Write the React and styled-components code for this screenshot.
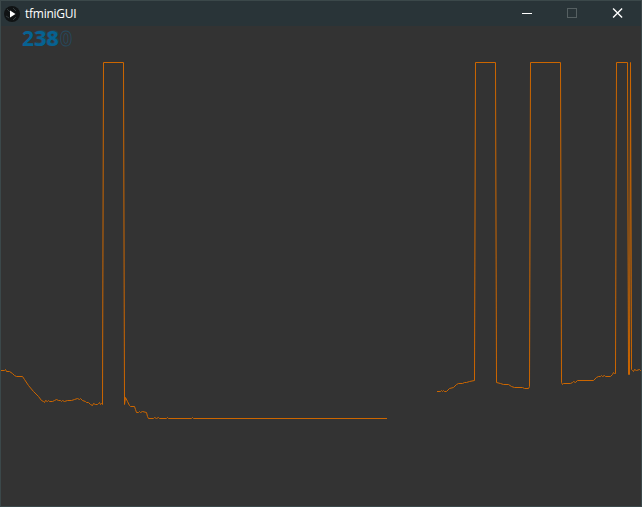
import React from "react";
import styled, { createGlobalStyle } from "styled-components";

const GlobalStyle = createGlobalStyle`
  * { box-sizing: border-box; }
  body { margin: 0; background: #333; overflow: hidden; }
`;

const Window = styled.div`
  width: 642px;
  height: 507px;
  display: flex;
  flex-direction: column;
  border: 1px solid #3b484a;
  background: #333333;
`;

const TitleBar = styled.header`
  height: 25px;
  flex: none;
  display: flex;
  align-items: center;
  background: #293438;
  color: #fff;
`;

const AppIcon = styled.svg`
  width: 16px;
  height: 16px;
  margin-left: 3px;
  flex: none;
`;

const Title = styled.h1`
  margin: 0 auto 0 5px;
  font: 400 12px/16px "Open Sans", "Noto Sans", sans-serif;
  letter-spacing: -0.25px;
`;

const Controls = styled.div`
  display: flex;
  height: 100%;
`;

const ControlButton = styled.button`
  width: ${(p) => p.$width || 45}px;
  height: 100%;
  padding: 0;
  border: 0;
  display: grid;
  place-items: center;
  background: transparent;
  color: ${(p) => (p.disabled ? "#566062" : "#fff")};
`;

const Glyph = styled.svg`
  width: 11px;
  height: 11px;
  display: block;
  fill: none;
  stroke: currentColor;
`;

const Canvas = styled.main`
  position: relative;
  flex: 1;
  min-height: 0;
`;

const Plot = styled.svg`
  display: block;
  width: 640px;
  height: 480px;
  fill: none;
  stroke: #cc6600;
  stroke-width: 1;
  stroke-linecap: square;
`;

const Reading = styled.div`
  position: absolute;
  left: 21px;
  top: 0;
  display: flex;
  font: 700 21px/25px "Noto Sans", "Open Sans", sans-serif;
  color: #066292;
`;

const Digit = styled.span`
  width: 12.4px;
  margin-left: ${(p) => (p.$faded ? "0.8px" : "0")};
  color: ${(p) => (p.$faded ? "#333333" : "inherit")};
  -webkit-text-stroke: ${(p) => (p.$faded ? "0.8px #254b60" : "0")};
  text-shadow: ${(p) => (p.$trail ? "-1px 0 #1f4e68, 1px -1px #29404d" : "none")};
`;

const traces = [
  "1,370 4,370 5,369 6,371 9,371 12,373 14,375 16,376 22,376 24,379 28,385 33,391 38,396 41,400 43,401 44,402 45,400 47,401 48,400 49,401 52,401 54,400 56,399 58,400 60,400 61,401 62,400 64,401 67,400 71,400 74,399 77,398 79,399 80,398 82,400 85,401 86,402 88,402 90,404 92,405 93,403 95,404 97,404 98,403 99,402 100,404 101,403 102,404 103,62 123,62 124,404 125,397 127,401 129,405 130,406 134,406 135,409 136,412 138,412 139,411 140,412 142,411 146,412 147,416 148,418 153,418 154,417 156,418 158,417 159,418 166,418 167,417 168,418 191,418 192,417 193,418 386,418",
  "437,391 440,391 441,390 442,391 443,390 444,391 446,391 449,388 453,387 456,384 458,383 462,383 464,382 466,382 469,381 474,380 475,62 495,62 496,382 500,383 503,384 508,384 511,386 514,387 522,387 524,388 528,388 529,386 530,62 560,62 561,382 562,384 563,383 570,383 572,382 573,381 575,382 577,380 593,380 596,377 598,376 600,376 601,375 602,376 604,375 605,376 610,376 612,374 613,372 614,373 615,373 616,62 627,62 628,374 629,374 630,62 631,369 632,370 633,371 634,369 636,370 639,369 640,370",
];

export default function App() {
  return (
    <>
      <GlobalStyle />
      <Window>
        <TitleBar>
          <AppIcon viewBox="0 0 16 16">
            <circle cx="8" cy="8" r="8" fill="#101314" />
            <path d="M3 3l3 3M9 2l3 3M2 10l3 2M9 14l3-3" stroke="#343c3e" />
            <path d="M6 4.5v7L11.5 8z" fill="#fff" />
          </AppIcon>
          <Title>tfminiGUI</Title>
          <Controls>
            <ControlButton aria-label="Minimize">
              <Glyph viewBox="0 0 11 11" shapeRendering="crispEdges"><path d="M1 5.5h10" /></Glyph>
            </ControlButton>
            <ControlButton aria-label="Maximize" disabled>
              <Glyph viewBox="0 0 11 11" shapeRendering="crispEdges"><path d="M1.5.5h9v9h-9z" /></Glyph>
            </ControlButton>
            <ControlButton aria-label="Close" $width={47}>
              <Glyph viewBox="-0.5 0 11 11"><path d="M.6.6l9 9M9.6.6l-9 9" strokeWidth="1.4" /></Glyph>
            </ControlButton>
          </Controls>
        </TitleBar>
        <Canvas>
          <Plot viewBox="0.5 25.5 640 480">
            {traces.map((points) => <polyline key={points} points={points} />)}
          </Plot>
          <Reading>
            <Digit>2</Digit>
            <Digit $trail>3</Digit>
            <Digit $trail>8</Digit>
            <Digit $faded>0</Digit>
          </Reading>
        </Canvas>
      </Window>
    </>
  );
}
